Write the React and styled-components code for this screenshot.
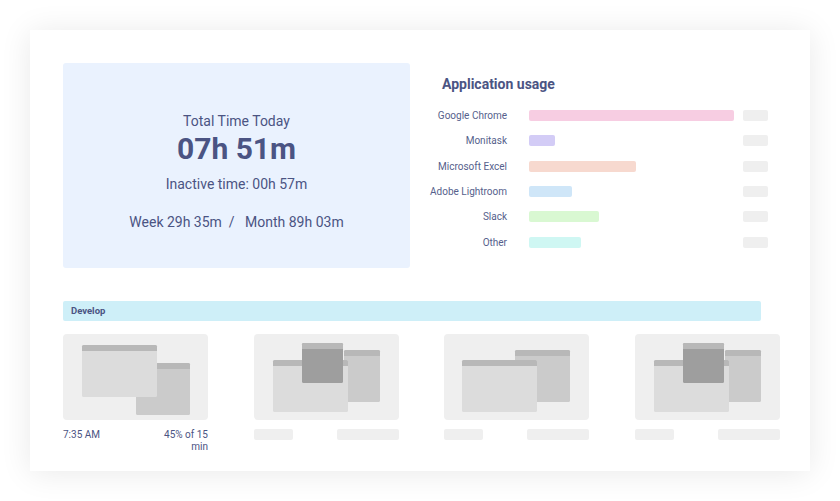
import React from 'react';
import styled, { createGlobalStyle } from 'styled-components';

const ink = '#4b5483';

const apps = [
  { name: 'Google Chrome', width: 205, color: '#f7cde2' },
  { name: 'Monitask', width: 26, color: '#d3ccf6' },
  { name: 'Microsoft Excel', width: 107, color: '#f7d9cf' },
  { name: 'Adobe Lightroom', width: 43, color: '#cfe6f8' },
  { name: 'Slack', width: 70, color: '#d9f8d2' },
  { name: 'Other', width: 52, color: '#cff7f3' },
];

const shots = [
  { layout: 'two', time: '7:35 AM', note: '45% of 15 min' },
  { layout: 'three' },
  { layout: 'twoBack' },
  { layout: 'three' },
];

const App = () => {
  return (
    <>
      <GlobalStyle />
      <Page>
        <Card>
          <TopRow>
            <TotalPanel>
              <Label>Total Time Today</Label>
              <BigTime>07h 51m</BigTime>
              <Label>Inactive time: 00h 57m</Label>
              <Summary>
                Week 29h 35m&nbsp; /&nbsp;&nbsp; Month 89h 03m
              </Summary>
            </TotalPanel>
            <UsagePanel>
              <UsageTitle>Application usage</UsageTitle>
              {apps.map((app) => (
                <UsageRow key={app.name}>
                  <AppName>{app.name}</AppName>
                  <Track>
                    <Bar color={app.color} style={{ width: app.width }} />
                  </Track>
                  <Placeholder w={25} />
                </UsageRow>
              ))}
            </UsagePanel>
          </TopRow>
          <ProjectBar>Develop</ProjectBar>
          <ShotGrid>
            {shots.map((shot, i) => (
              <Shot key={i}>
                <Thumb>
                  <Windows layout={shot.layout} />
                </Thumb>
                <Caption>
                  {shot.time ? (
                    <>
                      <CaptionText>{shot.time}</CaptionText>
                      <CaptionNote>{shot.note}</CaptionNote>
                    </>
                  ) : (
                    <>
                      <Placeholder w={39} />
                      <Placeholder w={62} />
                    </>
                  )}
                </Caption>
              </Shot>
            ))}
          </ShotGrid>
        </Card>
      </Page>
    </>
  );
};

const Win = ({ x, y, w, h, fill }) => (
  <g>
    <rect x={x} y={y} width={w} height={h} rx="1.5" fill={fill} />
    <rect x={x} y={y} width={w} height="6" rx="1.5" fill="#b8b8b8" />
    <rect x={x} y={y + 3} width={w} height="3" fill="#b8b8b8" />
  </g>
);

const Windows = ({ layout }) => {
  return (
    <svg width="145" height="86" viewBox="0 0 145 86">
      {layout === 'two' && (
        <>
          <Win x={73} y={29} w={54} h={52} fill="#cbcbcb" />
          <Win x={19} y={11} w={75} h={52} fill="#dcdcdc" />
        </>
      )}
      {layout === 'twoBack' && (
        <>
          <Win x={71} y={16} w={55} h={52} fill="#cbcbcb" />
          <Win x={18} y={26} w={75} h={52} fill="#dcdcdc" />
        </>
      )}
      {layout === 'three' && (
        <>
          <Win x={90} y={16} w={36} h={52} fill="#cbcbcb" />
          <Win x={19} y={26} w={75} h={52} fill="#dcdcdc" />
          <Win x={48} y={9} w={41} h={40} fill="#9e9e9e" />
        </>
      )}
    </svg>
  );
};

const GlobalStyle = createGlobalStyle`
  body {
    margin: 0;
    background: #ffffff;
    font-family: Roboto, 'Liberation Sans', sans-serif;
    color: ${ink};
  }
`;

const Page = styled.div`
  width: 840px;
  height: 501px;
  padding: 30px;
  box-sizing: border-box;
`;

const Card = styled.div`
  width: 780px;
  height: 441px;
  box-sizing: border-box;
  padding: 33px 30px 0 33px;
  background: #ffffff;
  box-shadow: 0 2px 30px rgba(0, 0, 0, 0.09);
`;

const TopRow = styled.div`
  display: flex;
`;

const TotalPanel = styled.div`
  width: 347px;
  height: 205px;
  padding-top: 12px;
  box-sizing: border-box;
  background: #eaf2fe;
  border-radius: 3px;
  display: flex;
  flex-direction: column;
  align-items: center;
  justify-content: center;
`;

const Label = styled.div`
  font-size: 14px;
  line-height: 16px;
`;

const BigTime = styled.div`
  font-size: 30px;
  font-weight: 700;
  line-height: 34px;
  margin: 3px 0 10px;
`;

const Summary = styled.div`
  font-size: 14px;
  line-height: 16px;
  margin-top: 22px;
`;

const UsagePanel = styled.div`
  margin-left: 20px;
  padding-top: 13px;
`;

const UsageTitle = styled.div`
  font-size: 14px;
  font-weight: 700;
  line-height: 16px;
  padding-left: 12px;
  margin-bottom: 11px;
`;

const UsageRow = styled.div`
  display: flex;
  align-items: center;
  height: 25.3px;
`;

const AppName = styled.div`
  width: 77px;
  text-align: right;
  font-size: 10px;
  white-space: nowrap;
  margin-right: 22px;
  color: #565f8c;
`;

const Track = styled.div`
  width: 205px;
  margin-right: 9px;
`;

const Bar = styled.div`
  height: 11px;
  border-radius: 2px;
  background: ${(p) => p.color};
`;

const Placeholder = styled.div`
  width: ${(p) => p.w}px;
  height: 11px;
  border-radius: 2px;
  background: #efefef;
`;

const ProjectBar = styled.div`
  width: 698px;
  height: 20px;
  margin-top: 33px;
  padding-left: 8px;
  box-sizing: border-box;
  background: #ceeff8;
  border-radius: 2px;
  font-size: 9.5px;
  font-weight: 700;
  line-height: 20px;
`;

const ShotGrid = styled.div`
  display: grid;
  grid-template-columns: repeat(4, 145px);
  column-gap: 45.67px;
  margin-top: 13px;
`;

const Shot = styled.div`
  display: flex;
  flex-direction: column;
`;

const Thumb = styled.div`
  height: 86px;
  background: #efefef;
  border-radius: 4px;
  display: flex;
`;

const Caption = styled.div`
  display: flex;
  justify-content: space-between;
  align-items: flex-start;
  margin-top: 9px;
`;

const CaptionText = styled.div`
  font-size: 10px;
  line-height: 12px;
`;

const CaptionNote = styled(CaptionText)`
  width: 50px;
  text-align: right;
`;

export default App;
